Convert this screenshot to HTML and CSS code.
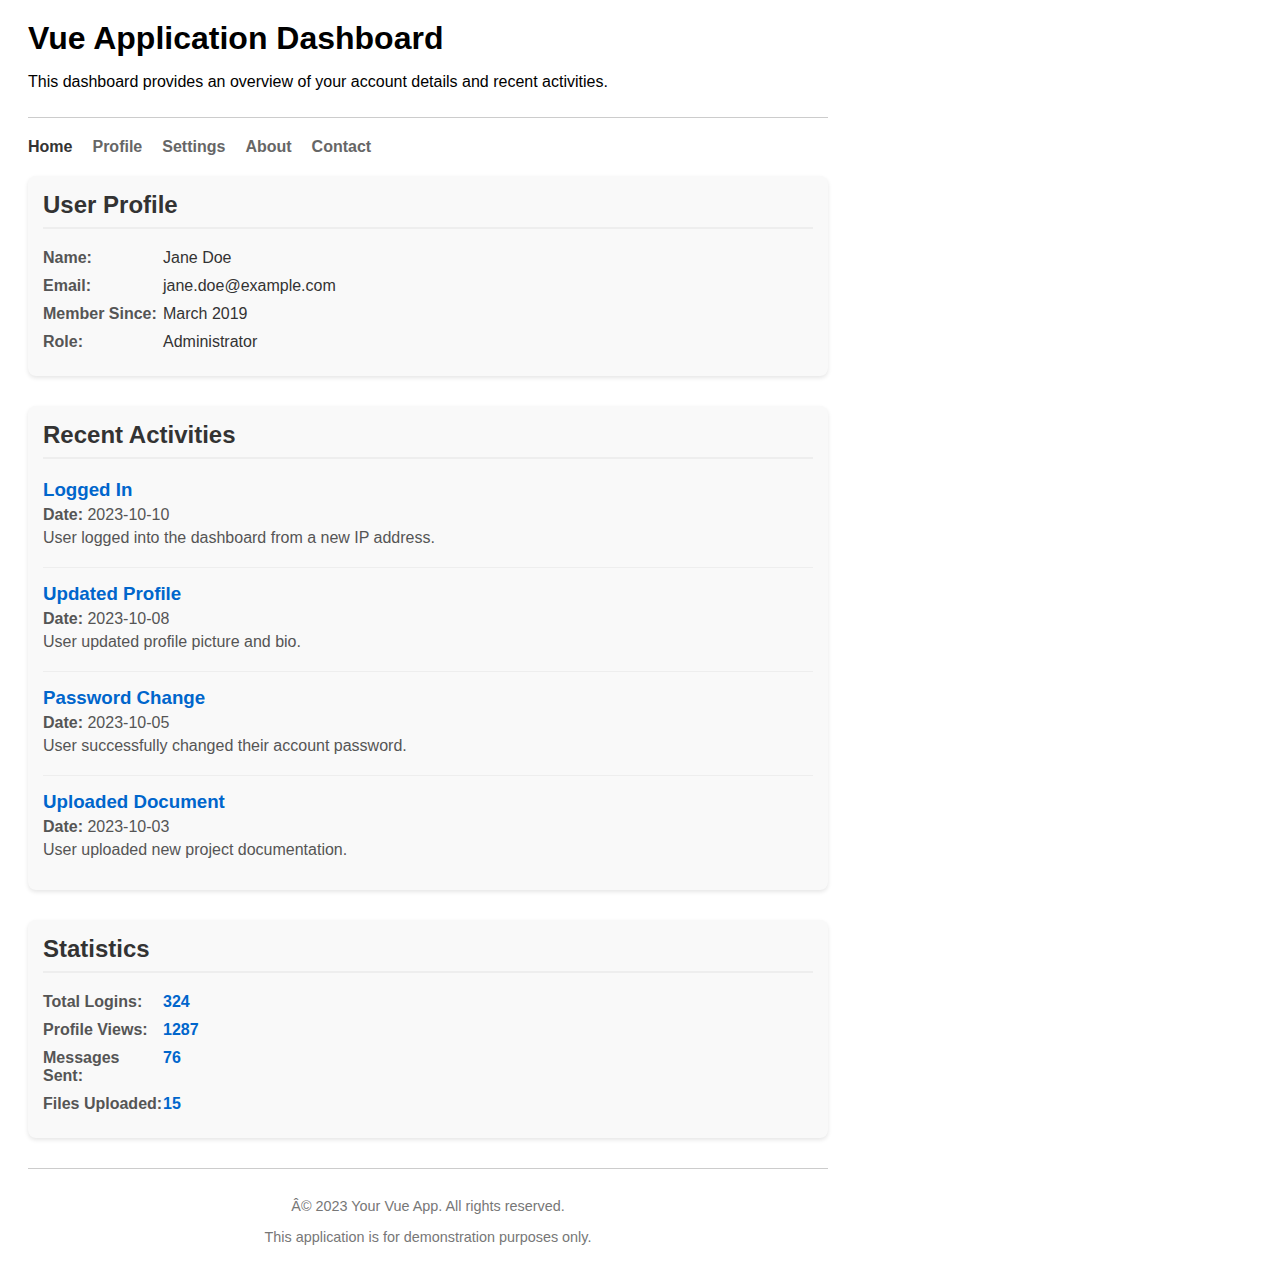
FILE: index.html
```html
<!DOCTYPE html>
<html lang="en">
<head>
<meta charset="utf-8">
<title>Vue Application Dashboard</title>
<link rel="stylesheet" href="styles.css">
</head>
<body>
<div class="app">
  <header class="header">
    <h1 class="title">Vue Application Dashboard</h1>
    <p class="intro">This dashboard provides an overview of your account details and recent activities.</p>
  </header>
  <nav class="nav">
    <a class="nav-link active" href="#">Home</a>
    <a class="nav-link" href="#">Profile</a>
    <a class="nav-link" href="#">Settings</a>
    <a class="nav-link" href="#">About</a>
    <a class="nav-link" href="#">Contact</a>
  </nav>

  <section class="card">
    <h2 class="card-title">User Profile</h2>
    <div class="info-list">
      <div class="info-row"><span class="info-label">Name:</span><span class="info-value">Jane Doe</span></div>
      <div class="info-row"><span class="info-label">Email:</span><span class="info-value">jane.doe@example.com</span></div>
      <div class="info-row"><span class="info-label">Member Since:</span><span class="info-value">March 2019</span></div>
      <div class="info-row"><span class="info-label">Role:</span><span class="info-value">Administrator</span></div>
    </div>
  </section>

  <section class="card">
    <h2 class="card-title">Recent Activities</h2>
    <ul class="activity-list">
      <li class="activity">
        <h3 class="activity-title">Logged In</h3>
        <p class="activity-text"><strong>Date:</strong> 2023-10-10</p>
        <p class="activity-text">User logged into the dashboard from a new IP address.</p>
      </li>
      <li class="activity">
        <h3 class="activity-title">Updated Profile</h3>
        <p class="activity-text"><strong>Date:</strong> 2023-10-08</p>
        <p class="activity-text">User updated profile picture and bio.</p>
      </li>
      <li class="activity">
        <h3 class="activity-title">Password Change</h3>
        <p class="activity-text"><strong>Date:</strong> 2023-10-05</p>
        <p class="activity-text">User successfully changed their account password.</p>
      </li>
      <li class="activity">
        <h3 class="activity-title">Uploaded Document</h3>
        <p class="activity-text"><strong>Date:</strong> 2023-10-03</p>
        <p class="activity-text">User uploaded new project documentation.</p>
      </li>
    </ul>
  </section>

  <section class="card">
    <h2 class="card-title">Statistics</h2>
    <div class="info-list">
      <div class="info-row"><span class="info-label">Total Logins:</span><span class="stat-value">324</span></div>
      <div class="info-row"><span class="info-label">Profile Views:</span><span class="stat-value">1287</span></div>
      <div class="info-row"><span class="info-label">Messages Sent:</span><span class="stat-value">76</span></div>
      <div class="info-row"><span class="info-label">Files Uploaded:</span><span class="stat-value">15</span></div>
    </div>
  </section>

  <footer class="footer">
    <p class="footer-text">&Acirc;&copy; 2023 Your Vue App. All rights reserved.</p>
    <p class="footer-text">This application is for demonstration purposes only.</p>
  </footer>
</div>
</body>
</html>
```

FILE: styles.css
```css
html, body {
  margin: 0;
  padding: 0;
  background: #ffffff;
}

body {
  font-family: "Liberation Sans", Arial, sans-serif;
  font-size: 16px;
  color: #000;
}

.app {
  width: 800px;
  padding: 20px 28px 0;
}

.header {
  padding-bottom: 26px;
  border-bottom: 1px solid #ccc;
}

.title {
  margin: 0;
  font-size: 32px;
  font-weight: bold;
  color: #000;
}

.intro {
  margin: 15.5px 0 0;
  font-size: 16px;
  color: #000;
}

.nav {
  display: flex;
  gap: 20px;
  padding: 20px 0;
}

.nav-link {
  font-weight: bold;
  color: #666;
  text-decoration: none;
}

.nav-link.active {
  color: #333;
}

.card {
  background: #f9f9f9;
  border-radius: 8px;
  box-shadow: 0 2px 4px rgba(0, 0, 0, 0.1);
  padding: 15px;
  margin-bottom: 30px;
}

.card-title {
  margin: 0 0 5px;
  padding-bottom: 8px;
  border-bottom: 2px solid #eee;
  font-size: 24px;
  font-weight: bold;
  color: #333;
}

.info-list {
  display: flex;
  flex-direction: column;
  gap: 10px;
  padding: 15.5px 0 9.5px;
}

.info-row {
  display: flex;
}

.info-label {
  width: 120px;
  flex-shrink: 0;
  font-weight: bold;
  color: #555;
}

.info-value {
  color: #333;
}

.stat-value {
  font-weight: bold;
  color: #0066cc;
}

.activity-list {
  list-style: none;
  margin: 0;
  padding: 0;
}

.activity {
  padding: 15px 0;
  border-bottom: 1px solid #eee;
}

.activity:last-child {
  border-bottom: none;
  padding-bottom: 11px;
}

.activity-title {
  margin: 0 0 5px;
  font-size: 18.72px;
  font-weight: bold;
  color: #0066cc;
}

.activity-text {
  margin: 5px 0;
  color: #555;
}

.activity-text strong {
  color: #555;
}

.footer {
  border-top: 1px solid #ccc;
  padding-top: 15.5px;
  text-align: center;
}

.footer-text {
  margin: 14.4px 0;
  font-size: 14.4px;
  color: #777;
}
```
